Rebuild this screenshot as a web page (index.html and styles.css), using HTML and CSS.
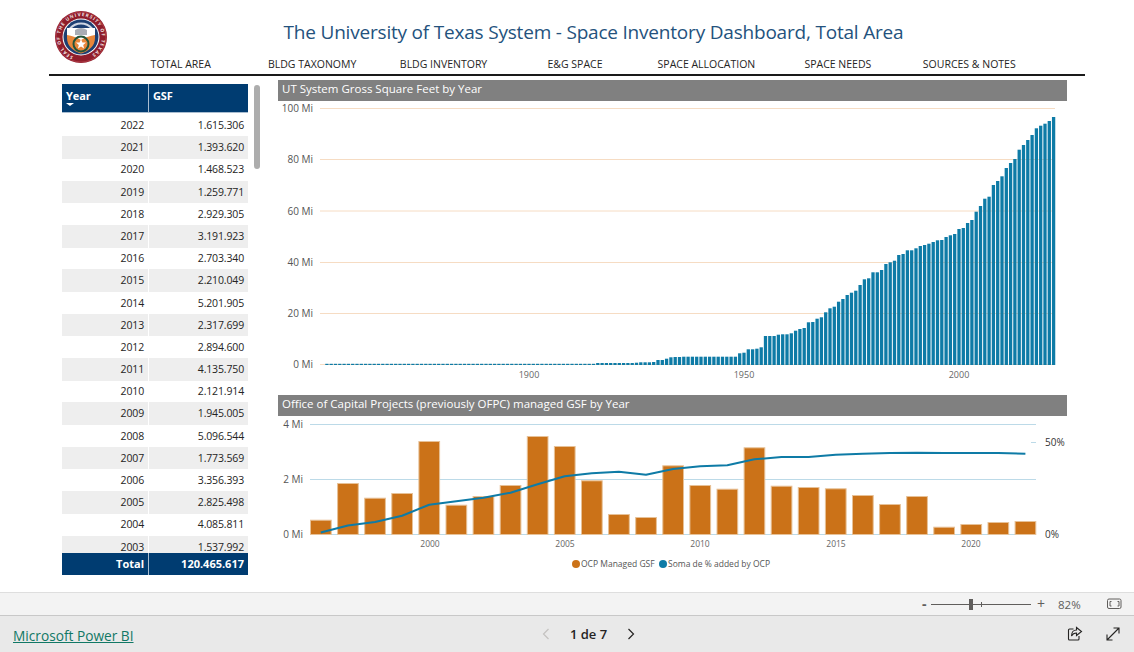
FILE: index.html
```html
<!DOCTYPE html>
<html lang="en">
<head>
<meta charset="utf-8">
<title>Space Inventory Dashboard</title>
<link rel="stylesheet" href="styles.css">
</head>
<body>
<div class="app">
  <main class="report">
    <header class="head">
      <div class="brand">
        <svg class="logo" viewBox="0 0 52 52" width="52" height="52" aria-hidden="true">
          <defs>
            <path id="sealArc" d="M26 46.800a20.800 20.800 0 1 1 .01 0"/>
          </defs>
          <circle cx="26" cy="26" r="26" fill="#8f1d2b"/>
          <circle cx="26" cy="26" r="25" fill="none" stroke="#b9434d" stroke-width=".7"/>
          <text class="seal-text"><textPath href="#sealArc" startOffset="6%">SEAL OF THE UNIVERSITY OF TEXAS</textPath></text>
          <circle cx="26" cy="26" r="18.500" fill="#fff"/>
          <circle cx="26" cy="26" r="17.500" fill="#1d3f72"/>
          <path class="seal-band" d="M15 17.500a14.500 14.500 0 0 1 22 0"/>
          <path d="M12 17h28v10c0 8-6 13-14 15.500-8-2.500-14-7.500-14-15.500z" fill="#e8863a"/>
          <path d="M12 17h28v7c-5 1-9 2-14 5-5-3-9-4-14-5z" fill="#fff"/>
          <path d="M20 24v-5q6-4 12 0v5z" fill="#a9adb5"/>
          <circle cx="26" cy="33" r="7.500" fill="none" stroke="#23543a" stroke-width="2"/>
          <path d="M26 28l1.400 3.400 3.600.2-2.800 2.300.9 3.600-3.100-2-3.100 2 .9-3.600-2.800-2.300 3.600-.2z" fill="#fff"/>
        </svg>
      </div>
      <div class="head-main">
        <h1 class="title">The University of Texas System - Space Inventory Dashboard, Total Area</h1>
        <nav class="tabs">
          <span class="tab">TOTAL AREA</span>
          <span class="tab">BLDG TAXONOMY</span>
          <span class="tab">BLDG INVENTORY</span>
          <span class="tab">E&amp;G SPACE</span>
          <span class="tab">SPACE ALLOCATION</span>
          <span class="tab">SPACE NEEDS</span>
          <span class="tab">SOURCES &amp; NOTES</span>
        </nav>
      </div>
    </header>

    <section class="content">
      <div class="table">
        <div class="thead">
          <div class="th"><span>Year</span><i class="sort"></i></div>
          <div class="th"><span>GSF</span></div>
        </div>
        <div class="tbody">
          <div class="row"><span>2022</span><span>1.615.306</span></div>
          <div class="row"><span>2021</span><span>1.393.620</span></div>
          <div class="row"><span>2020</span><span>1.468.523</span></div>
          <div class="row"><span>2019</span><span>1.259.771</span></div>
          <div class="row"><span>2018</span><span>2.929.305</span></div>
          <div class="row"><span>2017</span><span>3.191.923</span></div>
          <div class="row"><span>2016</span><span>2.703.340</span></div>
          <div class="row"><span>2015</span><span>2.210.049</span></div>
          <div class="row"><span>2014</span><span>5.201.905</span></div>
          <div class="row"><span>2013</span><span>2.317.699</span></div>
          <div class="row"><span>2012</span><span>2.894.600</span></div>
          <div class="row"><span>2011</span><span>4.135.750</span></div>
          <div class="row"><span>2010</span><span>2.121.914</span></div>
          <div class="row"><span>2009</span><span>1.945.005</span></div>
          <div class="row"><span>2008</span><span>5.096.544</span></div>
          <div class="row"><span>2007</span><span>1.773.569</span></div>
          <div class="row"><span>2006</span><span>3.356.393</span></div>
          <div class="row"><span>2005</span><span>2.825.498</span></div>
          <div class="row"><span>2004</span><span>4.085.811</span></div>
          <div class="row"><span>2003</span><span>1.537.992</span></div>
        </div>
        <div class="tfoot"><span>Total</span><span>120.465.617</span></div>
      </div>
      <div class="scrollbar"></div>

      <div class="charts">
        <h2 class="chart-title">UT System Gross Square Feet by Year</h2>
        <svg class="chart chart-top" id="topChart" viewBox="278 101 789 294" width="789" height="294">
          <g class="grid-o">
            <line x1="320" x2="1055" y1="108.500" y2="108.500"/>
            <line x1="320" x2="1055" y1="159.500" y2="159.500"/>
            <line x1="320" x2="1055" y1="211" y2="211"/>
            <line x1="320" x2="1055" y1="262.500" y2="262.500"/>
            <line x1="320" x2="1055" y1="313.500" y2="313.500"/>
            <line x1="320" x2="1055" y1="364.500" y2="364.500"/>
          </g>
          <g class="axis-y">
            <text x="313" y="112">100 Mi</text>
            <text x="313" y="163">80 Mi</text>
            <text x="313" y="215">60 Mi</text>
            <text x="313" y="266">40 Mi</text>
            <text x="313" y="317">20 Mi</text>
            <text x="313" y="368">0 Mi</text>
          </g>
          <g class="axis-x">
            <text x="529" y="378">1900</text>
            <text x="744" y="378">1950</text>
            <text x="959" y="378">2000</text>
          </g>
          <g id="topBars" class="bars-blue"></g>
        </svg>

        <h2 class="chart-title">Office of Capital Projects (previously OFPC) managed GSF by Year</h2>
        <svg class="chart chart-bottom" id="bottomChart" viewBox="278 415 789 160" width="789" height="160">
          <g class="grid-b">
            <line x1="310" x2="1036" y1="423.500" y2="423.500"/>
            <line x1="310" x2="1036" y1="478.500" y2="478.500"/>
            <line x1="310" x2="1036" y1="533.500" y2="533.500"/>
            <line x1="1031" x2="1036" y1="441.500" y2="441.500"/>
          </g>
          <g class="axis-y">
            <text x="303" y="426.500">4 Mi</text>
            <text x="303" y="481.500">2 Mi</text>
            <text x="303" y="536.500">0 Mi</text>
          </g>
          <g id="ocpBars" class="bars-orange"></g>
          <polyline id="ocpLine" class="line-blue" points=""/>
          <g class="axis-x axis-small">
            <text x="430" y="545.500">2000</text>
            <text x="565" y="545.500">2005</text>
            <text x="700" y="545.500">2010</text>
            <text x="836" y="545.500">2015</text>
            <text x="971" y="545.500">2020</text>
          </g>
          <g class="axis-pct">
            <text x="1045" y="444.500">50%</text>
            <text x="1045" y="536.500">0%</text>
          </g>
          <g class="legend">
            <circle cx="576" cy="563" r="4" class="dot-orange"/>
            <text x="581" y="566">OCP Managed GSF</text>
            <circle cx="663" cy="563" r="4" class="dot-blue"/>
            <text x="668" y="566">Soma de % added by OCP</text>
          </g>
        </svg>
      </div>
    </section>
  </main>

  <div class="statusbar">
    <span class="zoom-minus">-</span>
    <div class="slider"><i class="thumb"></i><i class="tick"></i></div>
    <span class="zoom-plus">+</span>
    <span class="zoom-val">82%</span>
    <svg class="fit" width="15" height="12" viewBox="0 0 15 12" aria-hidden="true">
      <rect x=".5" y="1" width="13.500" height="9.500" rx="1.500"/>
      <path d="M4.500 3.500h-1.500v4.500h1.500M10.500 3.500h1.500v4.500h-1.500"/>
    </svg>
  </div>

  <footer class="footer">
    <a class="pbi" href="#">Microsoft Power BI</a>
    <div class="pager">
      <svg class="chev chev-off" width="10" height="12" viewBox="0 0 10 12" aria-hidden="true"><path d="M7.500 1l-5 5 5 5"/></svg>
      <span class="page">1 de 7</span>
      <svg class="chev" width="10" height="12" viewBox="0 0 10 12" aria-hidden="true"><path d="M2.500 1l5 5-5 5"/></svg>
    </div>
    <div class="foot-icons">
      <svg class="ficon" width="16" height="16" viewBox="0 0 16 16" aria-hidden="true">
        <path d="M6.500 3h-4a1 1 0 0 0-1 1v9a1 1 0 0 0 1 1h8.500a1 1 0 0 0 1-1v-3"/>
        <path d="M9.500 1.500l5 4-5 4v-2.500c-2.500 0-4 1-5 3 0-3.500 2-6 5-6z"/>
      </svg>
      <svg class="ficon" width="16" height="16" viewBox="0 0 16 16" aria-hidden="true">
        <path d="M2 14L14 2M8.500 2H14v5.500M2 8.500V14h5.500"/>
      </svg>
    </div>
  </footer>
</div>
<script src="app.js"></script>
</body>
</html>
```
FILE: styles.css
```css
* { box-sizing: border-box; }
html, body { margin: 0; height: 100%; }
body {
  font-family: "Open Sans", "Noto Sans", "Liberation Sans", sans-serif;
  color: #252423;
  background: #fff;
  overflow: hidden;
}
.app { height: 100vh; display: flex; flex-direction: column; }
.report { height: 592px; flex: none; }

.head {
  height: 76px;
  margin: 0 49px;
  border-bottom: 2px solid #1a1a1a;
  display: flex;
}
.brand { width: 66px; padding: 11px 0 0 6px; flex: none; }
.logo { display: block; }
.seal-text { font-size: 4.600px; font-weight: 700; fill: #f3e6e6; letter-spacing: 1.050px; }
.seal-band { fill: none; stroke: #cfd6e2; stroke-width: 2; }
.head-main { width: 920px; }
.title {
  margin: 19px 0 0;
  padding-left: 37px;
  height: 27px;
  font-size: 19px;
  letter-spacing: -.2px;
  line-height: 27px;
  font-weight: 400;
  color: #24527d;
  text-align: center;
  white-space: nowrap;
}
.tabs { display: grid; grid-template-columns: repeat(7, 1fr); margin-top: 10px; }
.tab { font-size: 10.500px; line-height: 16px; text-align: center; white-space: nowrap; color: #252423; }

.content { display: flex; padding-left: 62px; }
.table { width: 186px; margin-top: 8px; flex: none; }
.thead {
  display: grid;
  grid-template-columns: 86px 99px;
  gap: 1px;
  height: 29px;
  background: #a9bdd0;
  border-bottom: 1px solid #a9bdd0;
}
.th {
  position: relative;
  background: #003c71;
  color: #fff;
  font-weight: 700;
  font-size: 11px;
  letter-spacing: -.1px;
  line-height: 15px;
  padding: 4px 0 0 4px;
}
.sort {
  display: block;
  width: 0;
  height: 0;
  margin-top: 0;
  border-left: 4px solid transparent;
  border-right: 4px solid transparent;
  border-top: 3px solid #fff;
}
.tbody { height: 439px; overflow: hidden; margin-top: 1px; }
.row {
  display: grid;
  grid-template-columns: 86px 99px;
  gap: 1px;
  height: 22.200px;
  font-size: 10.500px;
  letter-spacing: -.15px;
  line-height: 22.600px;
  text-align: right;
}
.row span { padding-right: 4px; }
.row:nth-child(even) span { background: #eeeeee; }
.tfoot {
  display: grid;
  grid-template-columns: 86px 99px;
  gap: 1px;
  height: 22px;
  background: #a9bdd0;
  text-align: right;
  font-size: 11px;
  line-height: 22px;
  font-weight: 700;
  color: #fff;
}
.tfoot span { background: #003c71; padding-right: 4px; }

.scrollbar {
  width: 6px;
  height: 84px;
  margin: 9px 0 0 6px;
  border-radius: 3px;
  background: #adadad;
  flex: none;
}
.charts { width: 789px; margin: 4px 0 0 18px; flex: none; }
.chart-title {
  margin: 0;
  height: 21px;
  padding-left: 4px;
  background: #808080;
  color: #fff;
  font-size: 11.500px;
  line-height: 18px;
  font-weight: 400;
  white-space: nowrap;
}
.chart { display: block; }
.grid-o line { stroke: #f6dcc3; stroke-width: 1; }
.grid-b line { stroke: #bcdae8; stroke-width: 1; }
.axis-y text { font-size: 10px; fill: #555; text-anchor: end; }
.axis-x text { font-size: 9px; fill: #666; text-anchor: middle; }
.axis-small text { font-size: 8.500px; }
.axis-pct text { font-size: 10px; fill: #333; }
.legend text { font-size: 8.500px; fill: #555; }
.bars-blue rect { fill: #0e7ba6; }
.bars-orange rect { fill: #cb7218; stroke: #e7c197; stroke-width: 1; }
.line-blue { fill: none; stroke: #0e7ba6; stroke-width: 2; stroke-linejoin: round; }
.dot-orange { fill: #cb7218; }
.dot-blue { fill: #0e7ba6; }

.statusbar {
  height: 24px;
  flex: none;
  display: flex;
  align-items: center;
  background: #f3f3f3;
  border-top: 1px solid #dedede;
  border-bottom: 1px solid #c8c8c8;
  padding-left: 922px;
  color: #605e5c;
}
.zoom-minus { width: 9px; font-size: 14px; font-weight: 700; line-height: 20px; }
.slider { position: relative; width: 100px; height: 1px; background: #605e5c; }
.thumb { position: absolute; left: 38px; top: -5px; width: 4px; height: 11px; background: #605e5c; }
.tick { position: absolute; left: 50px; top: -2px; width: 1px; height: 5px; background: #605e5c; }
.zoom-plus { margin-left: 6px; width: 12px; font-size: 14px; line-height: 20px; }
.zoom-val { margin-left: 9px; font-size: 11.500px; width: 26px; }
.fit { margin-left: 23px; fill: none; stroke: #605e5c; stroke-width: 1; }

.footer {
  flex: 1;
  display: flex;
  align-items: center;
  position: relative;
  background: #e9e9e9;
  padding: 2px 13px 0;
}
.pbi { font-size: 13.700px; color: #117865; text-decoration: underline; white-space: nowrap; }
.pager {
  position: absolute;
  left: 541px;
  top: 0;
  bottom: 0;
  display: flex;
  align-items: center;
}
.page { width: 75px; text-align: center; font-size: 13px; font-weight: 600; color: #252423; }
.chev { fill: none; stroke: #252423; stroke-width: 1.200; }
.chev-off { stroke: #c4c2c0; }
.foot-icons { margin-left: auto; display: flex; gap: 22px; margin-top: -2px; }
.ficon { fill: none; stroke: #252423; stroke-width: 1.100; }
```
FILE: app.js
```js
var SVG_NS = "http://www.w3.org/2000/svg";

function addRect(parent, x, y, w, h) {
  var r = document.createElementNS(SVG_NS, "rect");
  r.setAttribute("x", x);
  r.setAttribute("y", y);
  r.setAttribute("width", w);
  r.setAttribute("height", h);
  parent.appendChild(r);
}

// Top chart: bar height in px per year, 1916 to 2022, earlier years are a hairline.
var recent = [2,2,2,2,2,2,2,2,2,2.3,2.7,2.7,2.7,3,5,5,6.3,7.7,8,8,8.3,8.3,8.3,8.3,8.3,8.3,8.3,8.3,8.3,8.3,8.3,8.3,8.3,11.7,12.3,
  15.7,15.7,16.3,17.7,29,29,29,30.3,30.7,30.7,31.7,34.3,36,37,42.7,43,46.3,47.7,52.7,56.7,58.3,63.3,66,70,72.3,74.3,80,85.7,86.7,92.7,92.7,95,101,102.7,104.3,
  110,111,114.7,114.7,116.7,119,120,121.3,123,124.7,125,128,129.7,131,136,137,142,145,153.3,159,166.3,168.3,180,184,188.7,197,202,206,215.3,220,225,230,236.7,239.3,241.3,244,248];
// "recent" begins so that its last value lands on 2022.
var firstRecent = 2022 - recent.length + 1;
var topBars = document.getElementById("topBars");
for (var y = 1853; y <= 2022; y++) {
  var h = y < firstRecent ? 1.2 : recent[y - firstRecent];
  var cx = 959 + (y - 2000) * 4.3;
  addRect(topBars, cx - 1.65, 365 - h, 3.3, h);
}

// Bottom chart: orange bars 1996 to 2022, px above the axis.
var ocp = [14.3,51,36.3,41,93,29.3,38,49,98,88,53.7,20,17,68.7,49,45.3,86.7,48.3,47,45.7,39,30,38,7.3,10,12,13];
var ocpBars = document.getElementById("ocpBars");
ocp.forEach(function (v, i) {
  addRect(ocpBars, 310.5 + i * 27.1, 533.5 - v, 20.7, v);
});

// Line: y in page px per year.
var lineY = [531.5,524.5,521,514.7,503.7,500.3,496.7,491.7,483.3,475.3,472.3,470.7,473.7,468,465.3,464.3,458.3,456,456,453.7,452.7,452,451.7,452,452,452,452.7];
var pts = lineY.map(function (v, i) {
  return (320.8 + i * 27.1).toFixed(1) + "," + v;
});
document.getElementById("ocpLine").setAttribute("points", pts.join(" "));
```
